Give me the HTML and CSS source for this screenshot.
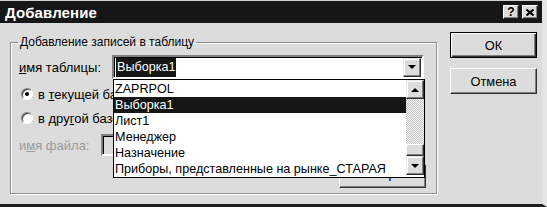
FILE: index.html
```html
<!DOCTYPE html>
<html>
<head>
<meta charset="utf-8">
<link rel="stylesheet" href="styles.css">
</head>
<body>
<div class="dialog">
  <div class="titlebar">
    <span class="title">Добавление</span>
    <div class="tbtns">
      <span class="tbtn help">?</span>
      <span class="tbtn"><svg width="8" height="7" viewBox="0 0 8 7"><path d="M0.5 0.5 L7.5 6.5 M7.5 0.5 L0.5 6.5" stroke="#000" stroke-width="2"/></svg></span>
    </div>
  </div>
  <div class="content">
    <fieldset class="group">
      <legend>Добавление записей в таблицу</legend>
      <div class="rows">
        <div class="row r1">
          <span class="label"><u>и</u>мя таблицы:</span>
          <div class="combo">
            <span class="value"><span class="sel">Выборка1</span></span>
            <span class="sbtn"><i class="arrow down"></i></span>
          </div>
        </div>
        <div class="row r2"><span class="radio on"></span><span>в <u>т</u>екущей базе данных</span></div>
        <div class="row r3"><span class="radio"></span><span>в дру<u>г</u>ой базе данных:</span></div>
        <div class="row r4"><span class="label dim">и<u>м</u>я файла:</span><span class="textbox"></span></div>
        <div class="row r5"><span class="btn browse">Обзор...</span></div>
      </div>
    </fieldset>
    <div class="buttons">
      <span class="btn default">ОК</span>
      <span class="btn">Отмена</span>
    </div>
  </div>
  <div class="droplist">
    <ul class="items">
      <li>ZAPRPOL</li>
      <li class="selected">Выборка1</li>
      <li>Лист1</li>
      <li>Менеджер</li>
      <li>Назначение</li>
      <li>Приборы, представленные на рынке_СТАРАЯ</li>
    </ul>
    <div class="scrollbar">
      <span class="sbtn"><i class="arrow up"></i></span>
      <span class="track"></span>
      <span class="thumb"></span>
      <span class="sbtn"><i class="arrow down"></i></span>
    </div>
  </div>
</div>
</body>
</html>
```

FILE: styles.css
```css
* { box-sizing: border-box; }
html, body { margin: 0; padding: 0; background: #dcdcdc; }
body {
  font-family: "Liberation Sans", Arial, sans-serif;
  font-size: 13px;
  color: #000;
}
u { text-decoration: underline; text-underline-offset: 1px; }

.dialog {
  position: relative;
  width: 547px;
  height: 207px;
  background: #dcdcdc;
  border-right: 5px solid #e4e4e4;
  border-bottom: 3px solid #202020;
  overflow: hidden;
}

.titlebar {
  height: 23px;
  background: #161616;
  display: flex;
  align-items: center;
  justify-content: space-between;
  padding: 0 3px 0 5px;
  border-top: 1px solid #d0d0d0;
}
.title {
  color: #fff;
  font-weight: bold;
  font-size: 15px;
  letter-spacing: 0.1px;
}
.tbtns { display: flex; gap: 3px; margin-right: 1px; }
.tbtn {
  width: 16px;
  height: 14px;
  background: #dcdcdc;
  border: 1px solid;
  border-color: #fff #202020 #202020 #fff;
  box-shadow: inset -1px -1px #808080;
  display: flex;
  align-items: center;
  justify-content: center;
  font-weight: bold;
  font-size: 12px;
  line-height: 12px;
}

.content {
  display: flex;
  align-items: flex-start;
  padding: 9px 0 0 10px;
}

.group {
  margin: 3px 0 0 0;
  padding: 0;
  width: 427px;
  height: 159px;
  border: 1px solid #8c8c8c;
  box-shadow: 1px 1px 0 #fff, inset 1px 1px 0 #fff;
  min-width: 0;
}
.group legend {
  margin-left: 7px;
  padding: 0 2px;
  line-height: 14px;
  font-size: 12px;
}

.rows {
  display: flex;
  flex-direction: column;
  padding: 0 10px 0 8px;
}
.row { display: flex; align-items: center; }
.r1 { margin-top: 6px; height: 24px; }
.r2 { margin-top: 7px; height: 16px; }
.r3 { margin-top: 8px; height: 16px; }
.r4 { margin-top: 8px; height: 22px; }
.r5 { margin-top: 8px; height: 24px; justify-content: flex-end; }

.label { width: 93px; flex: none; }
.r4 .label { width: 82px; }
.dim { color: #9a9a9a; }

.combo {
  width: 312px;
  height: 24px;
  background: #fff;
  border: 2px solid;
  border-color: #808080 #fff #fff #808080;
  box-shadow: inset 1px 1px #000;
  display: flex;
  align-items: center;
  padding: 1px 1px 1px 2px;
}
.combo .value { flex: 1; display: flex; align-items: center; height: 100%; }
.sel {
  background: #161616;
  color: #fff;
  padding: 0 1px;
  line-height: 19px;
  font-size: 12.6px;
}
.combo .sbtn { height: 19px; }

.radio {
  width: 12px;
  height: 12px;
  border-radius: 50%;
  background: #fff;
  border: 1px solid;
  border-color: #808080 #fff #fff #808080;
  box-shadow: inset 1px 1px #404040;
  margin: 0 5px 0 2px;
  flex: none;
  display: flex;
  align-items: center;
  justify-content: center;
}
.radio.on::after {
  content: "";
  width: 4px;
  height: 4px;
  border-radius: 50%;
  background: #000;
}

.textbox {
  width: 323px;
  height: 22px;
  border: 2px solid;
  border-color: #808080 #fff #fff #808080;
  box-shadow: inset 1px 1px #000;
}

.btn {
  display: flex;
  align-items: center;
  justify-content: center;
  width: 87px;
  height: 26px;
  background: #dcdcdc;
  border: 1px solid;
  border-color: #fff #303030 #303030 #fff;
  box-shadow: inset -1px -1px #808080;
  font-size: 12.8px;
}
.browse { height: 24px; padding-bottom: 5px; }
.buttons {
  margin-left: 13px;
  display: flex;
  flex-direction: column;
  gap: 10px;
}
.btn.default {
  border-color: #000;
  box-shadow: inset 1px 1px #fff, inset -1px -1px #303030, inset -2px -2px #808080;
}

.sbtn {
  width: 18px;
  height: 19px;
  flex: none;
  background: #dcdcdc;
  border: 1px solid;
  border-color: #e8e8e8 #303030 #303030 #e8e8e8;
  box-shadow: inset -1px -1px #808080, inset 1px 1px #fff;
  display: flex;
  align-items: center;
  justify-content: center;
}
.arrow {
  width: 0;
  height: 0;
  border-left: 4px solid transparent;
  border-right: 4px solid transparent;
}
.arrow.down { border-top: 4px solid #000; }
.arrow.up { border-bottom: 4px solid #000; }

.droplist {
  position: absolute;
  left: 113px;
  top: 79px;
  width: 312px;
  height: 99px;
  background: #fff;
  border: 1px solid #000;
  display: flex;
  padding-top: 1px;
}
.items {
  list-style: none;
  margin: 0;
  padding: 0;
  flex: 1;
  font-size: 12.6px;
}
.items li {
  height: 16px;
  line-height: 17px;
  padding-left: 1px;
  white-space: nowrap;
}
.items li.selected { background: #161616; color: #fff; }

.scrollbar {
  width: 18px;
  display: flex;
  flex-direction: column;
  margin-top: -1px;
}
.scrollbar .sbtn { height: 19px; }
.track {
  height: 45px;
  background: repeating-conic-gradient(#c4c4c4 0 25%, #f4f4f4 0 50%) 0 0 / 2px 2px;
}
.thumb {
  height: 12px;
  background: #dcdcdc;
  border: 1px solid;
  border-color: #fff #303030 #303030 #fff;
  box-shadow: inset -1px -1px #808080;
}
```
